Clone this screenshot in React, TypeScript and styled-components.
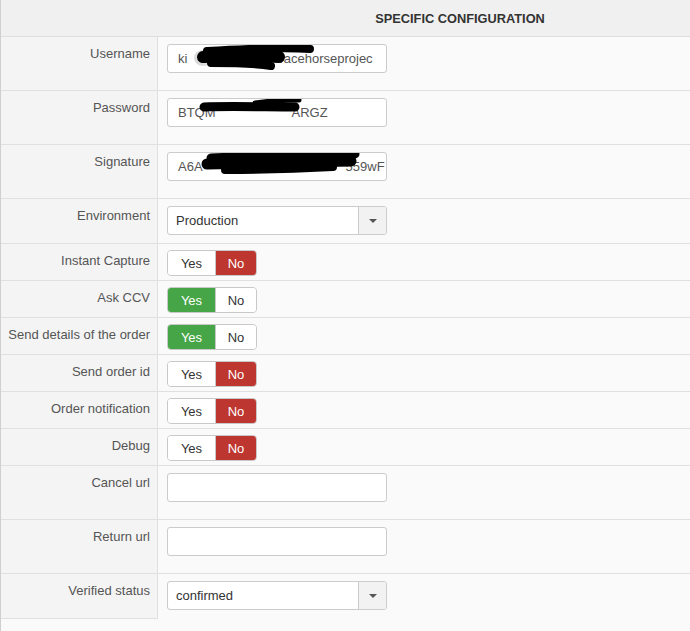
import React from 'react';
import styled, {createGlobalStyle} from 'styled-components';

const GlobalStyle = createGlobalStyle`
	html, body {
		margin: 0;
		padding: 0;
		background: #fafafa;
	}
	body {
		font-family: "Liberation Sans", Arial, sans-serif;
		font-size: 13px;
		color: #555;
	}
`;

const Panel = styled.div`
	min-height: 631px;
	border-left: 1px solid #cfcfcf;
	background: #fafafa;
	box-sizing: border-box;
`;

const Header = styled.div`
	height: 36px;
	border-bottom: 1px solid #dedede;
	background: #f0f0f0;
	padding-left: 229px;
	display: flex;
	align-items: center;
	justify-content: center;
	font-size: 12.8px;
	font-weight: bold;
	color: #333;
	text-transform: uppercase;
`;

const Row = styled.div`
	display: grid;
	grid-template-columns: 157px 1fr;
`;

const LabelCell = styled.div<{$h: number}>`
	height: ${p => p.$h}px;
	box-sizing: content-box;
	background: #f4f4f4;
	border-right: 1px solid #e0e0e0;
	border-bottom: 1px solid #e0e0e0;
	padding: 8px 7px 0 0;
	text-align: right;
	line-height: 18px;
	color: #555;
	white-space: nowrap;
`;

const ValueCell = styled.div<{$h: number; $top: number; $last?: boolean}>`
	height: ${p => p.$h}px;
	box-sizing: content-box;
	padding: ${p => p.$top}px 0 0 9px;
	border-bottom: 1px solid ${p => (p.$last ? 'transparent' : '#e0e0e0')};
`;

const Field = styled.div`
	position: relative;
	width: 220px;
	height: 29px;
	box-sizing: border-box;
	border: 1px solid #ccc;
	border-radius: 3px;
	background: #fff;
	padding: 0 10px;
	display: flex;
	align-items: center;
	overflow: hidden;
	color: #555;
	white-space: nowrap;
`;

const Hidden = styled.span<{$w: number}>`
	display: inline-block;
	width: ${p => p.$w}px;
	flex: none;
`;

const Scribble = styled.svg`
	position: absolute;
	left: -1px;
	top: -1px;
`;

const SelectBox = styled.div`
	width: 220px;
	height: 29px;
	box-sizing: border-box;
	border: 1px solid #ccc;
	border-radius: 3px;
	background: #fff;
	display: flex;
	overflow: hidden;
	color: #333;
`;

const SelectText = styled.div`
	flex: 1;
	display: flex;
	align-items: center;
	padding-left: 8px;
`;

const Caret = styled.div`
	width: 27px;
	border-left: 1px solid #ccc;
	background: #f2f2f2;
	display: flex;
	align-items: center;
	justify-content: center;
	&::after {
		content: '';
		border-left: 4px solid transparent;
		border-right: 4px solid transparent;
		border-top: 4px solid #555;
	}
`;

const Toggle = styled.div`
	display: inline-flex;
	height: 26px;
	box-sizing: border-box;
	border: 1px solid #c8c8c8;
	border-radius: 4px;
	overflow: hidden;
`;

const ToggleButton = styled.span<{$on: boolean; $tone: 'yes' | 'no'; $w: number}>`
	width: ${p => p.$w}px;
	display: flex;
	align-items: center;
	justify-content: center;
	font-size: 13px;
	background: ${p => (p.$on ? (p.$tone === 'yes' ? '#46a546' : '#bd362f') : '#fff')};
	color: ${p => (p.$on ? '#fff' : '#333')};
	& + & {
		border-left: 1px solid #c8c8c8;
	}
`;

type Strokes = Array<{d: string; w: number}>;

// marker strokes that black out parts of the credentials, in input-local coords
const blobs: Record<string, Strokes> = {
	user: [
		{d: 'M40 7 C75 5 115 3 143 5', w: 8},
		{d: 'M36 13 C65 12 95 12 112 13', w: 12},
		{d: 'M44 19 C70 19 92 20 104 22', w: 8},
	],
	pass: [
		{d: 'M37 9 C62 8 100 9 128 9', w: 9},
		{d: 'M88 5 C102 3 116 2 132 2', w: 5},
	],
	sig: [
		{d: 'M44 6 C90 4 140 3 188 2', w: 9},
		{d: 'M40 12 C90 11 140 10 184 9', w: 11},
		{d: 'M58 18 C100 18 130 17 166 15', w: 8},
	],
};

const Redacted = ({kind}: {kind: keyof typeof blobs}) => (
	<Scribble width={220} height={29} viewBox='0 0 220 29'>
		{kind === 'user' && <ellipse cx={36} cy={14} rx={9} ry={8} fill='#ccc' opacity={0.7} />}
		{blobs[kind].map((s, i) => (
			<path key={i} d={s.d} stroke='#000' strokeWidth={s.w} strokeLinecap='round' fill='none' />
		))}
	</Scribble>
);

type Item =
	| {label: string; kind: 'text'; value: string; tail?: string; gap?: number; blob?: keyof typeof blobs}
	| {label: string; kind: 'select'; value: string}
	| {label: string; kind: 'toggle'; yes: boolean};

const items: Item[] = [
	{label: 'Username', kind: 'text', value: 'ki', gap: 92, tail: 'racehorseprojec', blob: 'user'},
	{label: 'Password', kind: 'text', value: 'BTQM', gap: 76, tail: 'ARGZ', blob: 'pass'},
	{label: 'Signature', kind: 'text', value: 'A6A', gap: 143, tail: '559wF', blob: 'sig'},
	{label: 'Environment', kind: 'select', value: 'Production'},
	{label: 'Instant Capture', kind: 'toggle', yes: false},
	{label: 'Ask CCV', kind: 'toggle', yes: true},
	{label: 'Send details of the order', kind: 'toggle', yes: true},
	{label: 'Send order id', kind: 'toggle', yes: false},
	{label: 'Order notification', kind: 'toggle', yes: false},
	{label: 'Debug', kind: 'toggle', yes: false},
	{label: 'Cancel url', kind: 'text', value: ''},
	{label: 'Return url', kind: 'text', value: ''},
	{label: 'Verified status', kind: 'select', value: 'confirmed'},
];

const rowHeight = (kind: Item['kind']) => (kind === 'text' ? 53 : kind === 'select' ? 44 : 36);

const Control = ({item}: {item: Item}) => {
	if (item.kind === 'select') {
		return (
			<SelectBox>
				<SelectText>{item.value}</SelectText>
				<Caret />
			</SelectBox>
		);
	}

	if (item.kind === 'toggle') {
		return (
			<Toggle>
				<ToggleButton $on={item.yes} $tone='yes' $w={47}>Yes</ToggleButton>
				<ToggleButton $on={!item.yes} $tone='no' $w={40}>No</ToggleButton>
			</Toggle>
		);
	}

	return (
		<Field>
			{item.value}
			{item.gap && <Hidden $w={item.gap} />}
			{item.tail}
			{item.blob && <Redacted kind={item.blob} />}
		</Field>
	);
};

const App = () => (
	<>
		<GlobalStyle />
		<Panel>
			<Header>Specific configuration</Header>
			{items.map((item, i) => {
				const h = rowHeight(item.kind);
				const top = item.kind === 'toggle' ? 6 : 7;
				return (
					<Row key={item.label}>
						<LabelCell $h={h - 8}>{item.label}</LabelCell>
						<ValueCell $h={h - top} $top={top} $last={i === items.length - 1}>
							<Control item={item} />
						</ValueCell>
					</Row>
				);
			})}
		</Panel>
	</>
);

export default App;
